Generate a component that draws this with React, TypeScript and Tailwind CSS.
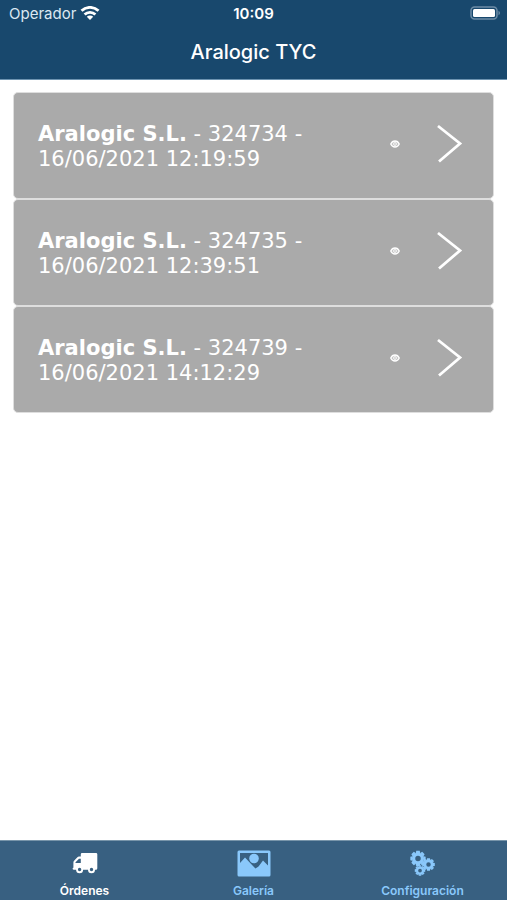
import { useState } from "react";

// ─── Orders ───────────────────────────────────────────────────────────────────
const ORDERS = [
  { id: "324734", company: "Aralogic S.L.", date: "16/06/2021 12:19:59" },
  { id: "324735", company: "Aralogic S.L.", date: "16/06/2021 12:39:51" },
  { id: "324739", company: "Aralogic S.L.", date: "16/06/2021 14:12:29" },
];

// ─── Icons ────────────────────────────────────────────────────────────────────
function WifiIcon() {
  return (
    <svg
      className="w-5 h-4 text-white"
      viewBox="0 0 20 16"
      fill="none"
      aria-hidden="true"
    >
      <g stroke="currentColor" strokeWidth="2.8">
        <path d="M1.5 4.8a12.2 12.2 0 0 1 17 0" />
        <path d="M4.6 8.5a7.7 7.7 0 0 1 10.8 0" />
      </g>
      <path d="M6.8 10.7a4.6 4.6 0 0 1 6.4 0L10 14z" fill="currentColor" />
    </svg>
  );
}

function BatteryIcon() {
  return (
    <svg className="w-8 h-4" viewBox="0 0 32 16" fill="none" aria-hidden="true">
      <rect x="2" y="1" width="26" height="12" rx="3.5" stroke="#6d8ca6" strokeWidth="1.5" />
      <rect x="4" y="3" width="22" height="8" rx="1.5" fill="#fff" />
      <path d="M29.5 4.8c2 .8 2 3.6 0 4.400z" fill="#6d8ca6" />
    </svg>
  );
}

function EyeIcon() {
  return (
    <svg className="w-[10px] h-2" viewBox="0 0 20 16" fill="none" aria-hidden="true">
      <path
        d="M1.5 8c2-4.500 5-6 8.500-6s6.500 1.500 8.500 6c-2 4.500-5 6-8.500 6s-6.500-1.500-8.500-6z"
        fill="#fff"
        fillOpacity=".3"
        stroke="#fff"
        strokeWidth="2.6"
      />
      <circle cx="10" cy="8" r="2.8" stroke="#fff" strokeWidth="1.8" />
    </svg>
  );
}

function ChevronIcon() {
  return (
    <svg
      className="w-7 h-10"
      viewBox="0 0 28 40"
      fill="none"
      stroke="#fff"
      strokeWidth="2.8"
      aria-hidden="true"
    >
      <path d="M2 2 24 19.5 3 37.5" />
    </svg>
  );
}

function TruckIcon() {
  return (
    <svg className="w-[26px] h-[22px]" viewBox="0 0 26 22" aria-hidden="true">
      <path
        fill="currentColor"
        fillRule="evenodd"
        d="M10 1h14q1.300 0 1.300 1.200v14q0 1.500-1.500 1.500H23a3.500 3.500 0 0 1-7 0h-4.900a3.500 3.500 0 0 1-7 0H2q-1.400 0-1.400-1 0-.7.800-.9v-5.300q0-1 .7-1.700L5.400 5.300q.7-.7 1.600-.7h1.800V2.200q0-1.200 1.200-1.200zM7 6.800 3.500 10.300v.7h5.300V6.800zM7.600 15.800a1.700 1.700 0 1 0 0 3.400 1.700 1.700 0 0 0 0-3.400zM19.500 15.800a1.700 1.700 0 1 0 0 3.400 1.700 1.700 0 0 0 0-3.400z"
      />
    </svg>
  );
}

function GalleryIcon() {
  return (
    <svg className="w-[34px] h-[27px]" viewBox="0 0 34 27" aria-hidden="true">
      <path
        fill="currentColor"
        fillRule="evenodd"
        d="M2 .5h30q1.500 0 1.500 1.500v23q0 1.500-1.500 1.500H2Q.5 26.500.5 25V2Q.5.5 2 .5zM3 3v10l5-5.500 8 8.500 2.500 2.500 3-2 4.500-6 5 5V3z"
      />
      <circle cx="17" cy="8.500" r="4.800" fill="currentColor" />
    </svg>
  );
}

const TEETH = [0, 45, 90, 135, 180, 225, 270, 315];

function Gear({ cx, cy, r }: { cx: number; cy: number; r: number }) {
  return (
    <g transform={`translate(${cx} ${cy}) scale(${r / 8})`}>
      <circle r="4.8" fill="none" stroke="currentColor" strokeWidth="3.6" />
      {TEETH.map((angle) => (
        <path
          key={angle}
          d="M-2.400-6-1.900-8.400h3.800L2.400-6z"
          fill="currentColor"
          transform={`rotate(${angle})`}
        />
      ))}
    </g>
  );
}

function GearsIcon() {
  return (
    <svg className="w-[26px] h-[26px]" viewBox="0 0 26 26" aria-hidden="true">
      <Gear cx={8} cy={8.5} r={7.3} />
      <Gear cx={18.5} cy={14.5} r={6} />
      <Gear cx={10} cy={20.5} r={5} />
    </svg>
  );
}

// ─── Tabs ─────────────────────────────────────────────────────────────────────
const TABS = [
  { key: "orders", label: "Órdenes", Icon: TruckIcon },
  { key: "gallery", label: "Galería", Icon: GalleryIcon },
  { key: "settings", label: "Configuración", Icon: GearsIcon },
];

export default function App() {
  const [active, setActive] = useState("orders");

  return (
    <div className="flex flex-col min-h-screen bg-white font-[Inter,sans-serif]">
      {/* ── Header ── */}
      <header className="bg-[#18486d] text-white border-b border-[#6d94b1]">
        <div className="grid grid-cols-3 items-center h-7 px-[6px]">
          <div className="flex items-center gap-1 pl-[3px] text-[15px] text-[#dce8f2]">
            Operador
            <WifiIcon />
          </div>
          <p className="text-center text-[15px] font-semibold">10:09</p>
          <div className="flex justify-end">
            <BatteryIcon />
          </div>
        </div>
        <h1 className="h-[51px] text-center text-[20px] leading-[48px] font-medium">
          Aralogic TYC
        </h1>
      </header>

      {/* ── Order list ── */}
      <main className="flex-1 px-[13px] pt-3">
        <ul>
          {ORDERS.map((order) => (
            <li key={order.id}>
              <button
                type="button"
                className="flex items-center w-full h-[107px] pl-6 pr-[29px] text-left text-white bg-[#aaaaaa] border border-[#dedede] rounded-[5px]"
              >
                <span className="flex-1 pt-0.5 text-[21px] leading-[25px] font-[Verdana,'DejaVu_Sans',sans-serif]">
                  <b>{order.company}</b> - {order.id} -
                  <br />
                  {order.date}
                </span>
                <span className="flex items-center gap-9 pb-1">
                  <EyeIcon />
                  <ChevronIcon />
                </span>
              </button>
            </li>
          ))}
        </ul>
      </main>

      {/* ── Tab bar ── */}
      <nav className="grid grid-cols-3 h-[60px] bg-[#386081] border-t border-[#7895aa]">
        {TABS.map(({ key, label, Icon }) => (
          <button
            key={key}
            type="button"
            onClick={() => setActive(key)}
            className={`flex flex-col items-center pt-2 ${active === key ? "text-white" : "text-[#8ac8fb]"}`}
          >
            <span className="flex items-center h-7">
              <Icon />
            </span>
            <span className="mt-1 text-[12px] leading-5 font-semibold">
              {label}
            </span>
          </button>
        ))}
      </nav>
    </div>
  );
}
